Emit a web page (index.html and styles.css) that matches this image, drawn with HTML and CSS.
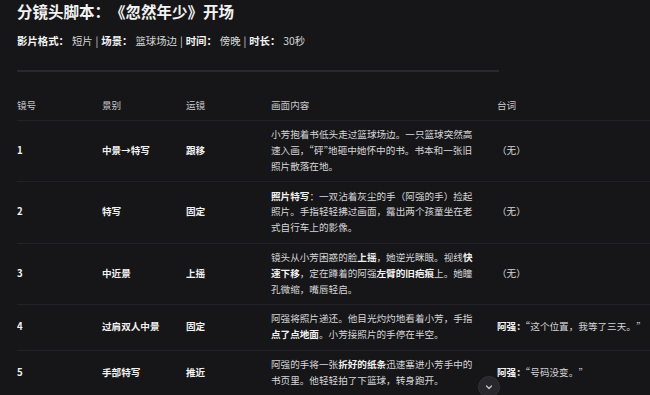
FILE: index.html
```html
<!DOCTYPE html>
<html lang="zh-CN">
<head>
<meta charset="utf-8">
<title>分镜头脚本</title>
<link rel="stylesheet" href="styles.css">
</head>
<body>
<main class="page">
  <h1 class="title">分镜头脚本：《忽然年少》开场</h1>
  <p class="meta"><b>影片格式：</b> 短片 | <b>场景：</b> 篮球场边 | <b>时间：</b> 傍晚 | <b>时长：</b> 30秒</p>
  <hr class="rule">
  <div class="table-wrap">
    <table class="shots">
      <colgroup>
        <col class="c-no"><col class="c-size"><col class="c-move"><col class="c-content"><col class="c-line">
      </colgroup>
      <thead>
        <tr><th>镜号</th><th>景别</th><th>运镜</th><th>画面内容</th><th>台词</th></tr>
      </thead>
      <tbody>
        <tr>
          <td class="strong">1</td><td class="strong">中景→特写</td><td class="strong">跟移</td>
          <td>小芳抱着书低头走过篮球场边。一只篮球突然高速入画，<span class="q" lang="en">“</span>砰<span class="q" lang="en">”</span>地砸中她怀中的书。书本和一张旧照片散落在地。</td>
          <td>（无）</td>
        </tr>
        <tr>
          <td class="strong">2</td><td class="strong">特写</td><td class="strong">固定</td>
          <td><b>照片特写</b>：一双沾着灰尘的手（阿强的手）捡起照片。手指轻轻拂过画面，露出两个孩童坐在老式自行车上的影像。</td>
          <td>（无）</td>
        </tr>
        <tr>
          <td class="strong">3</td><td class="strong">中近景</td><td class="strong">上摇</td>
          <td>镜头从小芳困惑的脸<b>上摇</b>，她逆光眯眼。视线<b>快速下移</b>，定在蹲着的阿强<b>左臂的旧疤痕</b>上。她瞳孔微缩，嘴唇轻启。</td>
          <td>（无）</td>
        </tr>
        <tr>
          <td class="strong">4</td><td class="strong">过肩双人中景</td><td class="strong">固定</td>
          <td>阿强将照片递还。他目光灼灼地看着小芳，手指<b>点了点地面</b>。小芳接照片的手停在半空。</td>
          <td><b>阿强：</b><span class="q" lang="en">“</span>这个位置，我等了三天。<span class="q" lang="en">”</span></td>
        </tr>
        <tr>
          <td class="strong">5</td><td class="strong">手部特写</td><td class="strong">推近</td>
          <td>阿强的手将一张<b>折好的纸条</b>迅速塞进小芳手中的书页里。他轻轻拍了下篮球，转身跑开。</td>
          <td><b>阿强：</b><span class="q" lang="en">“</span>号码没变。<span class="q" lang="en">”</span></td>
        </tr>
      </tbody>
    </table>
  </div>
</main>
<button class="scroll-down" type="button" aria-label="向下滚动">
  <svg width="10" height="10" viewBox="0 0 10 10"><path d="M2.5 4 L5 6.5 L7.5 4" fill="none" stroke="#c8c8cc" stroke-width="1.2" stroke-linecap="round" stroke-linejoin="round"/></svg>
</button>
</body>
</html>
```

FILE: styles.css
```css
html, body {
  margin: 0;
  padding: 0;
  background: #161618;
  overflow: hidden;
}

body {
  font-family: "Noto Sans CJK SC", "Noto Sans", sans-serif;
  color: #d6d6d8;
  text-spacing-trim: space-all;
}

.page {
  padding: 0 0 0 17px;
}

.title {
  margin: 0;
  font-size: 15.5px;
  line-height: 22px;
  font-weight: 700;
  color: #f2f2f2;
}

.meta {
  margin: 11px 0 0;
  font-size: 10.4px;
  line-height: 16px;
  color: #d6d6d8;
  word-spacing: 0.6px;
}

.meta b {
  color: #f2f2f2;
  font-weight: 700;
}

.rule {
  width: 482px;
  margin: 21px 0 0;
  border: 0;
  height: 2px;
  background: #2a2a2e;
}

.table-wrap {
  overflow: hidden;
  margin-top: 18px;
}

.shots {
  width: 660px;
  table-layout: fixed;
  border-collapse: collapse;
  font-size: 9.6px;
  line-height: 15.8px;
}

.c-no { width: 85px; }
.c-size { width: 84px; }
.c-move { width: 85px; }
.c-content { width: 226px; }
.c-line { width: 180px; }

.shots th {
  text-align: left;
  font-weight: 400;
  color: #c8c8cc;
  padding: 7.5px 16px 6.5px 0;
  border-bottom: 1px solid #222226;
}

.shots td {
  padding: 6.5px 16px 6.5px 0;
  vertical-align: middle;
  border-bottom: 1px solid #222226;
  color: #d6d6d8;
}

.shots td.strong,
.shots td b {
  font-weight: 700;
  color: #f2f2f2;
}

.q {
  font-variant-east-asian: proportional-width;
}

.scroll-down {
  position: fixed;
  left: 478px;
  top: 376px;
  width: 22px;
  height: 22px;
  border-radius: 50%;
  border: 1px solid #333337;
  background: #28282c;
  padding: 0;
  display: flex;
  align-items: center;
  justify-content: center;
}
```
